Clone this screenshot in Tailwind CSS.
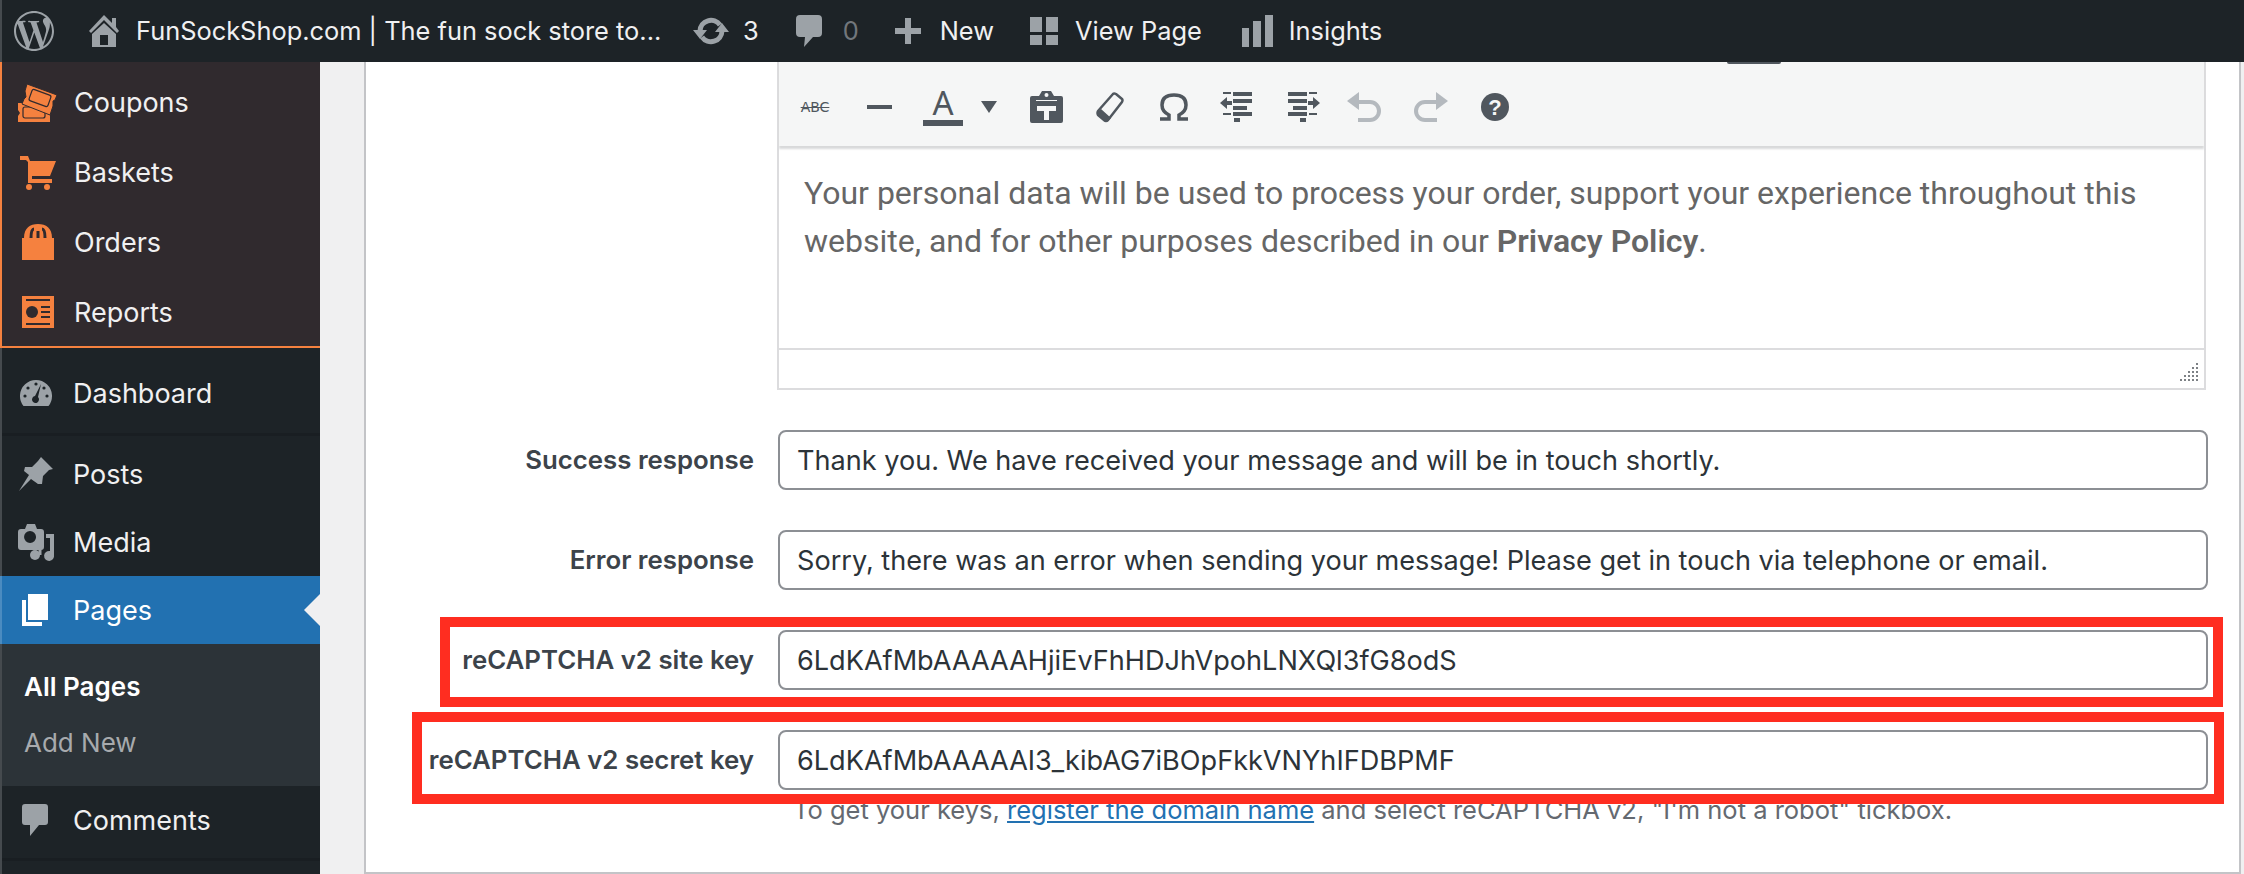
<!DOCTYPE html>
<html lang="en">
<head>
  <meta charset="UTF-8" />
  <title>Edit Page</title>
  <script src="https://cdn.jsdelivr.net/npm/@tailwindcss/browser@4"></script>
</head>
<body class="h-[874px] w-[2244px] overflow-hidden bg-[#f0f0f1] font-['Inter','Liberation_Sans',sans-serif]">
  <!-- admin bar -->
  <header class="flex h-[62px] items-center border-l-2 border-[#454a4e] bg-[#1d2327] text-[25.4px] text-[#f0f0f1]">
    <svg class="ml-[12px] h-[40px] w-[40px]" viewBox="0 0 24 24" fill="#9ca2a7"><path d="M21.469 6.825c.84 1.537 1.318 3.3 1.318 5.175 0 3.979-2.156 7.456-5.363 9.325l3.295-9.527c.615-1.54.82-2.771.82-3.864 0-.405-.026-.78-.07-1.11m-7.981.105c.647-.03 1.232-.105 1.232-.105.582-.075.514-.93-.067-.899 0 0-1.755.135-2.88.135-1.064 0-2.85-.15-2.85-.15-.585-.03-.661.855-.075.885 0 0 .54.061 1.125.09l1.68 4.605-2.37 7.08L5.354 6.9c.649-.03 1.234-.1 1.234-.1.585-.075.516-.93-.065-.896 0 0-1.746.138-2.874.138-.2 0-.438-.008-.69-.015C4.911 3.15 8.235 1.215 12 1.215c2.809 0 5.365 1.072 7.286 2.833-.046-.003-.091-.009-.141-.009-1.06 0-1.812.923-1.812 1.914 0 .89.513 1.643 1.06 2.531.411.72.89 1.643.89 2.977 0 .915-.354 1.994-.821 3.479l-1.075 3.585-3.9-11.61.001.014zM12 22.784c-1.059 0-2.081-.153-3.048-.437l3.237-9.406 3.315 9.087c.024.053.05.101.078.149-1.12.393-2.325.609-3.582.609M1.211 12c0-1.564.336-3.05.935-4.39L7.29 21.709C3.694 19.96 1.212 16.271 1.211 12M12 0C5.385 0 0 5.385 0 12s5.385 12 12 12 12-5.385 12-12S18.615 0 12 0"/></svg>
    <svg class="ml-[35px] h-[32px] w-[30px]" viewBox="0 0 30 32" fill="#9ca2a7"><path d="M15 0 L23 8 V3 H27 V12 L30 16 L28 18 L15 5 L2 18 L0 16Z"/><path fill-rule="evenodd" d="M15 8 L27 19 V32 H3 V19Z M11 20 V30 H19 V20Z"/></svg>
    <span class="ml-[17px] w-[523px] whitespace-nowrap">FunSockShop.com | The fun sock store to...</span>
    <svg class="ml-[34px] h-[28px] w-[36px]" viewBox="0 0 36 28" fill="none" stroke="#9ca2a7" stroke-width="5"><path d="M7 14 A11 11 0 0 1 27 8"/><path d="M29 14 A11 11 0 0 1 9 20"/><path fill="#9ca2a7" stroke="none" d="M0 13 H14 L7 22Z M22 15 H36 L29 6Z"/></svg>
    <span class="ml-[14px]">3</span>
    <svg class="ml-[37px] h-[32px] w-[26px]" viewBox="0 0 26 32" fill="#9ca2a7"><path d="M4 0 H22 Q26 0 26 4 V18 Q26 22 22 22 H17 L8 32 L9 22 H4 Q0 22 0 18 V4 Q0 0 4 0Z"/></svg>
    <span class="ml-[21px] text-[#72777c]">0</span>
    <svg class="ml-[36px] h-[26px] w-[26px]" viewBox="0 0 26 26" fill="#9ca2a7"><path d="M10 0 H16 V10 H26 V16 H16 V26 H10 V16 H0 V10 H10Z"/></svg>
    <span class="ml-[19px]">New</span>
    <svg class="ml-[36px] h-[28px] w-[28px]" viewBox="0 0 28 28" fill="#9ca2a7"><rect width="12" height="15"/><rect x="16" width="12" height="15"/><rect y="18" width="12" height="10"/><rect x="16" y="18" width="12" height="10"/></svg>
    <span class="ml-[17px]">View Page</span>
    <svg class="ml-[40px] h-[32px] w-[32px]" viewBox="0 0 32 32" fill="#9ca2a7"><rect y="13" width="7" height="19"/><rect x="11" y="6" width="8" height="26"/><rect x="23" width="8" height="32"/></svg>
    <span class="ml-[15px]">Insights</span>
  </header>

  <div class="flex h-[812px]">
    <!-- admin menu -->
    <aside class="w-[320px] shrink-0 border-l-2 border-[#454a4e] bg-[#1d2327] text-[27px] text-[#f0f0f1]">
      <nav class="-ml-[2px] border-b-2 border-l-2 border-[#f5813f] bg-[#302a2e] pt-[5px] pb-0 h-[286px]">
        <a class="flex h-[70px] items-center pl-[16px]">
          <svg class="mr-[16px] h-[40px] w-[40px]" viewBox="0 0 40 40"><path fill="#f5813f" d="M0 21 H32 V26 L30 28 L32 31 V40 H0 V34 L2 31 L0 28Z"/><rect x="5" y="25" width="22" height="11" rx="2" fill="#f5813f" stroke="#302a2e" stroke-width="1.2"/><path fill="#f5813f" stroke="#302a2e" stroke-width="1" d="M9 2 L39 13 L37 18 L35 19 L35 24 L32 33 L4 22 L6 17 L8 15 L7 9Z"/><rect x="12" y="10" width="20" height="12" rx="2" fill="#f5813f" stroke="#302a2e" stroke-width="1.2" transform="rotate(20 22 16)"/></svg>
          <span class="pt-[2px]">Coupons</span>
        </a>
        <a class="flex h-[70px] items-center pl-[16px]">
          <svg class="mr-[16px] h-[40px] w-[40px]" viewBox="0 0 40 40" fill="#f5813f"><path d="M2 4 H10 L12 9 H38 L32 24 H14 V27 H34 V31 H10 V10 L8 8 H2Z"/><circle cx="11" cy="35" r="3"/><circle cx="29" cy="35" r="3"/></svg>
          <span class="pt-[2px]">Baskets</span>
        </a>
        <a class="flex h-[70px] items-center pl-[16px]">
          <svg class="mr-[16px] h-[40px] w-[40px]" viewBox="0 0 40 40" fill="#f5813f"><path d="M6 16 C6 6 12 2 20 2 C28 2 34 6 34 16Z"/><rect x="4" y="16" width="32" height="22"/><path stroke="#302a2e" stroke-width="3" fill="none" d="M13 16 C13 10 14 7 16 7 M27 16 C27 10 26 7 24 7 M20 16 V9"/></svg>
          <span class="pt-[2px]">Orders</span>
        </a>
        <a class="flex h-[70px] items-center pl-[16px]">
          <svg class="mr-[16px] h-[40px] w-[40px]" viewBox="0 0 40 40"><rect x="4" y="4" width="32" height="32" fill="#f5813f"/><g fill="#302a2e"><rect x="8" y="7" width="24" height="2"/><circle cx="14" cy="20" r="6"/><rect x="23" y="14" width="9" height="2"/><rect x="23" y="19" width="9" height="2"/><rect x="23" y="24" width="9" height="2"/><rect x="8" y="31" width="24" height="2"/></g></svg>
          <span class="pt-[2px]">Reports</span>
        </a>
      </nav>

      <a class="mt-[10px] flex h-[70px] items-center pl-[16px]">
        <svg class="mr-[15px] h-[40px] w-[40px]" viewBox="0 0 40 40"><path fill="#9ca2a7" d="M5.500 33 A16 16 0 1 1 30.500 33Z"/><g fill="#1d2327"><circle cx="18" cy="11" r="1.6"/><circle cx="10" cy="15" r="1.6"/><circle cx="7" cy="23" r="1.6"/><circle cx="29" cy="23" r="1.6"/><circle cx="26" cy="15" r="1.6"/><path d="M23 11 L20 24 A3.5 3.5 0 1 1 17 23Z"/></g></svg>
        <span class="pt-[2px]">Dashboard</span>
      </a>
      <div class="mt-[5px] h-[3px] bg-[#191e22]"></div>

      <a class="mt-[4px] flex h-[68px] items-center pl-[16px]">
        <svg class="mr-[15px] h-[40px] w-[40px]" viewBox="0 0 40 40" fill="#9ca2a7"><path d="M23 3 L35 15 L31 16 L25 22 L24 30 L20 30 L13 25 L1 37 L11 21 L6 17 L7 13 L14 13 L20 7Z"/></svg>
        <span class="pt-[2px]">Posts</span>
      </a>
      <a class="flex h-[68px] items-center pl-[16px]">
        <svg class="mr-[15px] h-[40px] w-[40px]" viewBox="0 0 40 40"><path fill="#9ca2a7" fill-rule="evenodd" d="M3 7 H7 L9 2 H17 L19 7 H23 Q26 7 26 10 V25 Q26 28 23 28 H3 Q0 28 0 25 V10 Q0 7 3 7Z M12 9 A6 6 0 1 0 12.1 21 A6 6 0 0 0 12 9Z"/><path fill="#9ca2a7" d="M28 12 H36 V33 A5 5 0 1 1 32 29 V16 H28Z"/><circle cx="17" cy="33" r="5" fill="#9ca2a7"/><path d="M22 20 V33" stroke="#9ca2a7" stroke-width="3"/></svg>
        <span class="pt-[2px]">Media</span>
      </a>
      <a class="relative -ml-[2px] flex h-[68px] items-center border-l-2 border-[#4b8bc0] bg-[#2271b1] pl-[16px] text-white">
        <svg class="mr-[15px] h-[40px] w-[40px]" viewBox="0 0 40 40" fill="#fff"><rect x="10" y="4" width="20" height="26"/><path d="M4 10 H8 V32 H24 V36 H4Z"/></svg>
        <span class="pt-[2px]">Pages</span>
        <span class="absolute right-0 top-[18px] h-0 w-0 border-y-[16px] border-r-[16px] border-y-transparent border-r-[#f0f0f1]"></span>
      </a>
      <ul class="bg-[#2c3338] pt-[14px] pb-[16px] text-[26px]">
        <li class="flex h-[56px] items-center pl-[22px] font-semibold text-white">All Pages</li>
        <li class="flex h-[56px] items-center pl-[22px] text-[#a7aaad]">Add New</li>
      </ul>
      <a class="flex h-[68px] items-center pl-[16px]">
        <svg class="mr-[15px] h-[40px] w-[40px]" viewBox="0 0 40 40" fill="#9ca2a7"><path d="M7 4 H27 Q30 4 30 7 V22 Q30 25 27 25 H21 L12 36 L12 25 H7 Q4 25 4 22 V7 Q4 4 7 4Z"/></svg>
        <span class="pt-[2px]">Comments</span>
      </a>
      <div class="mt-[4px] h-[3px] bg-[#191e22]"></div>
    </aside>

    <!-- settings panel -->
    <main class="relative ml-[44px] mr-[3px] flex-1 border-x-2 border-b-2 border-[#c3c4c7] bg-white">
      <div class="-ml-[1px] w-[1429px] translate-x-[412px] border-x-2 border-b-2 border-[#dcdcde]">
        <div class="relative flex h-[84px] items-center bg-[#f5f6f6] pl-[4px] pt-[6px] text-[#50575e] shadow-[0_3px_2px_#d8d9da]">
          <span class="absolute left-[948px] top-0 h-[2px] w-[54px] rounded-b bg-[#50575e]"></span>
          <span class="flex w-[64px] justify-center text-[14px] font-['DejaVu_Sans',sans-serif] line-through">ABC</span>
          <span class="flex w-[64px] justify-center"><span class="h-[4px] w-[25px] bg-[#50575e]"></span></span>
          <span class="flex w-[64px] flex-col items-center font-['Noto_Sans',sans-serif] text-[33px] leading-[28px]">A<span class="mt-[3px] h-[6px] w-[40px] bg-[#50575e]"></span></span>
          <span class="flex w-[28px] justify-center"><svg class="h-[12px] w-[16px]" viewBox="0 0 16 12" fill="#50575e"><path d="M0 0 H16 L8 12Z"/></svg></span>
          <span class="ml-[11px] flex w-[64px] justify-center"><svg class="h-[32px] w-[33px]" viewBox="0 0 33 32"><path fill="#50575e" d="M2 5 H9 L12 0 H21 L24 5 H31 Q33 5 33 7 V30 Q33 32 31 32 H2 Q0 32 0 30 V7 Q0 5 2 5Z"/><circle cx="16.5" cy="4" r="2" fill="#f5f6f6"/><path fill="#f5f6f6" d="M7 15 H26 V20 H19 V29 H14 V20 H7Z"/><path fill="none" stroke="#f5f6f6" stroke-width="1" d="M6 9.500 H27"/></svg></span>
          <span class="flex w-[64px] justify-center"><svg class="h-[31px] w-[28px]" viewBox="0 0 28 31"><path fill="none" stroke="#50575e" stroke-width="2.500" stroke-linejoin="round" d="M20 2 L26 7 Q27 8 26 10 L12 28 Q10 30 8 28 L2 23 Q1 21 2 19 L17 2 Q18 1 20 2Z"/><path fill="#50575e" d="M2 20 L5 17 L15 26 L12 29 Q10 30 8 28 L2 23Z"/></svg></span>
          <span class="flex w-[64px] justify-center"><svg class="h-[28px] w-[30px]" viewBox="0 0 30 28" fill="none" stroke="#50575e" stroke-width="3.500"><path d="M1 26 H10 V22 C4 19 3 14 3 12 C3 5 8 2 15 2 C22 2 27 5 27 12 C27 14 26 19 20 22 V26 H29"/></svg></span>
          <span class="-ml-[3px] mr-[3px] flex w-[65px] justify-center"><svg class="h-[30px] w-[32px]" viewBox="0 0 32 30" fill="#50575e"><rect x="3" y="0" width="8" height="2"/><rect x="13" y="0" width="19" height="4"/><rect x="13" y="7" width="19" height="4"/><rect x="13" y="14" width="14" height="4"/><rect x="13" y="20" width="19" height="4"/><rect x="3" y="21" width="8" height="2"/><rect x="14" y="26" width="6" height="4"/><path d="M0 11 L7 5 V9 H12 V13 H7 V17Z"/></svg></span>
          <span class="flex w-[65px] justify-center"><svg class="h-[30px] w-[32px]" viewBox="0 0 32 30" fill="#50575e"><rect x="21" y="0" width="8" height="2"/><rect x="0" y="0" width="19" height="4"/><rect x="0" y="7" width="19" height="4"/><rect x="5" y="14" width="14" height="4"/><rect x="0" y="20" width="19" height="4"/><rect x="21" y="21" width="8" height="2"/><rect x="12" y="26" width="6" height="4"/><path d="M32 11 L25 5 V9 H20 V13 H25 V17Z"/></svg></span>
          <span class="-ml-[3px] mr-[3px] flex w-[62px] justify-center"><svg class="h-[30px] w-[34px]" viewBox="0 0 34 30" fill="none" stroke="#b4b9be" stroke-width="4"><path d="M10 10 H23 A9 9 0 0 1 23 28 H11"/><path fill="#b4b9be" stroke="none" d="M0 9 L12 0 V18Z"/></svg></span>
          <span class="flex w-[65px] justify-center"><svg class="h-[30px] w-[34px]" viewBox="0 0 34 30" fill="none" stroke="#b4b9be" stroke-width="4"><path d="M24 10 H11 A9 9 0 0 0 11 28 H23"/><path fill="#b4b9be" stroke="none" d="M34 9 L22 0 V18Z"/></svg></span>
          <span class="flex w-[64px] justify-center"><span class="flex h-[28px] w-[28px] items-center justify-center rounded-full bg-[#50575e] font-['Liberation_Sans',sans-serif] text-[22px] font-bold text-[#f5f6f6]">?</span></span>
        </div>
        <div class="h-[202px] px-[25px] pt-[23px] font-['Roboto',sans-serif] text-[32px] leading-[48px] text-[#666]">
          <p>Your personal data will be used to process your order, support your experience throughout this website, and for other purposes described in our <strong class="font-semibold">Privacy Policy</strong>.</p>
        </div>
        <div class="relative h-[40px] border-t-2 border-[#dcdcde]">
          <svg class="absolute bottom-[6px] right-[5px] h-[20px] w-[20px]" viewBox="0 0 20 20" fill="#7d8185"><path d="M17 1h2v2h-2zM13 5h2v2h-2zM17 5h2v2h-2zM9 9h2v2H9zM13 9h2v2h-2zM17 9h2v2h-2zM5 13h2v2H5zM9 13h2v2H9zM13 13h2v2h-2zM17 13h2v2h-2zM1 17h2v2H1zM5 17h2v2H5zM9 17h2v2H9zM13 17h2v2h-2zM17 17h2v2h-2z"/></svg>
        </div>
      </div>

      <form class="mt-[40px] grid grid-cols-[388px_1430px] gap-x-[24px] gap-y-[40px] text-[25.8px]">
        <label class="self-center text-right font-semibold text-[#3c434a]">Success response</label>
        <input class="h-[60px] rounded-[8px] border-2 border-[#8c8f94] px-[17px] text-[27.1px] text-[#2c3338]" value="Thank you. We have received your message and will be in touch shortly." />
        <label class="self-center text-right font-semibold text-[#3c434a]">Error response</label>
        <input class="h-[60px] rounded-[8px] border-2 border-[#8c8f94] px-[17px] text-[27.1px] text-[#2c3338]" value="Sorry, there was an error when sending your message! Please get in touch via telephone or email." />
        <label class="self-center text-right font-semibold text-[#3c434a]">reCAPTCHA v2 site key</label>
        <input class="h-[60px] rounded-[8px] border-2 border-[#8c8f94] px-[17px] text-[27.1px] text-[#2c3338]" value="6LdKAfMbAAAAAHjiEvFhHDJhVpohLNXQl3fG8odS" />
        <label class="self-center text-right font-semibold text-[#3c434a]">reCAPTCHA v2 secret key</label>
        <input class="h-[60px] rounded-[8px] border-2 border-[#8c8f94] px-[17px] text-[27.1px] text-[#2c3338]" value="6LdKAfMbAAAAAI3_kibAG7iBOpFkkVNYhIFDBPMF" />
      </form>
      <p class="ml-[427px] mt-[4px] whitespace-nowrap text-[25.5px] leading-[32px] text-[#646970]">To get your keys, <a class="text-[#2271b1] underline">register the domain name</a> and select reCAPTCHA v2, "I'm not a robot" tickbox.</p>

      <!-- annotation boxes drawn over the form -->
      <div class="absolute left-[74px] top-[555px] h-[90px] w-[1783px] border-[10px] border-[#ff2d20]"></div>
      <div class="absolute left-[46px] top-[650px] h-[92px] w-[1812px] border-[10px] border-[#ff2d20]"></div>
    </main>
  </div>
</body>
</html>
